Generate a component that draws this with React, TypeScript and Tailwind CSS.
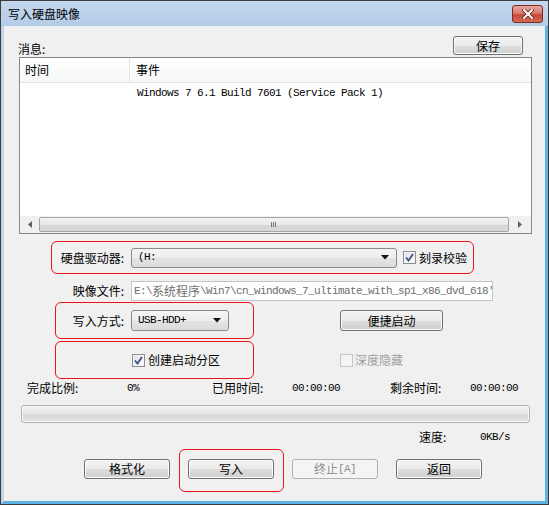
import clsx from 'clsx'
import type { ReactNode } from 'react'

const CJK = "font-['Noto_Sans_CJK_SC',sans-serif]"
const MONO = "font-['Liberation_Mono',monospace] text-[11px] tracking-[-0.6px]"

function Btn({
  children,
  className,
  disabled,
}: {
  children: ReactNode
  className?: string
  disabled?: boolean
}) {
  return (
    <div
      className={clsx(
        'flex items-center justify-center rounded-[3px] border text-[12px] leading-none',
        CJK,
        disabled
          ? 'border-[#adb2b5] bg-[#f4f4f4] text-[#8d8d8d]'
          : 'border-[#707070] bg-[linear-gradient(to_bottom,#f2f2f2_0%,#ebebeb_50%,#dddddd_51%,#cfcfcf_100%)] text-black shadow-[inset_0_0_0_1px_#fbfbfb]',
        className,
      )}
    >
      {children}
    </div>
  )
}

function Check({ checked, disabled }: { checked?: boolean; disabled?: boolean }) {
  return (
    <div
      className={clsx(
        'flex h-[13px] w-[13px] shrink-0 items-center justify-center border',
        disabled
          ? 'border-[#c6c6c6] bg-[#f4f4f4]'
          : 'border-[#8e8f8f] bg-[linear-gradient(135deg,#dcdcdc,#ffffff)] shadow-[inset_0_0_0_1px_#f4f4f4]',
      )}
    >
      {checked && (
        <svg width="9" height="9" viewBox="0 0 9 9">
          <path d="M1 4.5 L3.5 7.5 L8 1" fill="none" stroke="#3b4f8a" strokeWidth="1.8" />
        </svg>
      )}
    </div>
  )
}

function Combo({ children, className }: { children: ReactNode; className?: string }) {
  return (
    <div
      className={clsx(
        'flex items-center justify-between rounded-[3px] border border-[#8a8a8a] bg-[linear-gradient(to_bottom,#f5f5f5_0%,#ededed_50%,#e3e3e3_51%,#dcdcdc_100%)] pl-[6px] pr-[7px]',
        className,
      )}
    >
      <span className={clsx(MONO, 'text-black')}>{children}</span>
      <svg width="8" height="5" viewBox="0 0 8 5">
        <path d="M0 0 H8 L4 4.5 Z" fill="#111" />
      </svg>
    </div>
  )
}

function RedBox({ children, className }: { children: ReactNode; className?: string }) {
  return (
    <div className={clsx('flex items-center rounded-[6px] border border-[#e8151b]', className)}>
      {children}
    </div>
  )
}

export default function App() {
  return (
    <div className="flex h-[505px] w-[549px] flex-col border border-[#3c3c3c] bg-[#f0f0f0] text-[12px] text-black">
      {/* title bar */}
      <div className="flex h-[25px] shrink-0 items-center justify-between bg-[linear-gradient(to_bottom,#c4d8ee,#b3cce8)] pl-[7px] pr-[5px]">
        <span className={clsx(CJK, 'text-[12px] leading-none')}>写入硬盘映像</span>
        <div className="mt-[1px] flex h-[18px] w-[31px] items-center justify-center rounded-[3px] border border-[#7b2a22] bg-[linear-gradient(to_bottom,#e8a89c_0%,#d97c6c_45%,#c8473a_55%,#d46a58_100%)]">
          <svg width="12" height="10" viewBox="0 0 12 10">
            <path d="M2 1 L10 9 M10 1 L2 9" stroke="#5a1a14" strokeWidth="3.4" strokeLinecap="square" />
            <path d="M2 1 L10 9 M10 1 L2 9" stroke="#ffffff" strokeWidth="2" strokeLinecap="square" />
          </svg>
        </div>
      </div>

      {/* body */}
      <div className="flex flex-1 flex-col border-b-[3px] border-l-[3px] border-r-[3px] border-b-[#5db3e4] border-l-[#c0d5ec] border-r-[#5db3e4] bg-[#f0f0f0]">
        <div className="ml-[14px] mr-[22px] mt-[10px] flex items-end justify-between">
          <span className={clsx(CJK, 'leading-[12px]')}>消息:</span>
          <Btn className="h-[19px] w-[70px]">保存</Btn>
        </div>

        {/* list view */}
        <div className="ml-[15px] mt-[2px] flex h-[177px] w-[513px] flex-col border border-[#828790] bg-white">
          <div className="flex h-[25px] shrink-0 border-b border-[#e5e5e5] bg-[linear-gradient(to_bottom,#ffffff,#f6f7f8)]">
            <div className={clsx(CJK, 'flex w-[110px] items-center border-r border-[#e3e4e6] pl-[5px]')}>时间</div>
            <div className={clsx(CJK, 'flex items-center pl-[6px]')}>事件</div>
          </div>
          <div className="flex-1">
            <div className={clsx(MONO, 'ml-[117px] mt-[3px] leading-[14px]')}>
              Windows 7 6.1 Build 7601 (Service Pack 1)
            </div>
          </div>
          <div className="flex h-[17px] shrink-0 items-center bg-[#f0f0f0]">
            <div className="flex w-[19px] items-center justify-center">
              <svg width="4" height="7" viewBox="0 0 4 7">
                <path d="M4 0 V7 L0 3.5 Z" fill="#606060" />
              </svg>
            </div>
            <div className="flex h-[15px] flex-1 items-center justify-center rounded-[2px] border border-[#a5a5a5] bg-[linear-gradient(to_bottom,#f3f3f3_0%,#e8e8e8_50%,#d6d6d6_51%,#d9d9d9_100%)]">
              <svg width="6" height="5" viewBox="0 0 6 5">
                <path d="M0.5 0 V5 M2.5 0 V5 M4.5 0 V5" stroke="#777" strokeWidth="1" />
              </svg>
            </div>
            <div className="flex w-[22px] items-center justify-center">
              <svg width="4" height="7" viewBox="0 0 4 7">
                <path d="M0 0 V7 L4 3.5 Z" fill="#606060" />
              </svg>
            </div>
          </div>
        </div>

        {/* drive */}
        <RedBox className="ml-[47px] mt-[7px] h-[33px] w-[423px]">
          <span className={clsx(CJK, 'w-[72px] text-right')}>硬盘驱动器:</span>
          <Combo className="ml-[7px] h-[20px] w-[266px]">(H:</Combo>
          <div className="ml-[6px]">
            <Check checked />
          </div>
          <span className={clsx(CJK, 'ml-[3px]')}>刻录校验</span>
        </RedBox>

        {/* image file */}
        <div className="ml-[48px] mt-[7px] flex items-center">
          <span className={clsx(CJK, 'w-[72px] text-right')}>映像文件:</span>
          <div className="ml-[7px] flex h-[20px] w-[362px] items-center overflow-hidden whitespace-nowrap border border-[#c2c4ca] bg-white pl-[2px] text-[#6d6d6d]">
            <span className={MONO}>{'E:\\'}</span>
            <span className={clsx(CJK, 'text-[12px]')}>系统程序</span>
            <span className={MONO}>{'\\Win7\\cn_windows_7_ultimate_with_sp1_x86_dvd_618\''}</span>
          </div>
        </div>

        {/* write mode */}
        <div className="ml-[51px] mt-[1px] flex items-center">
          <RedBox className="h-[37px] w-[199px]">
            <span className={clsx(CJK, 'w-[68px] text-right')}>写入方式:</span>
            <Combo className="ml-[7px] h-[21px] w-[98px]">USB-HDD+</Combo>
          </RedBox>
          <Btn className="ml-[86px] h-[21px] w-[103px]">便捷启动</Btn>
        </div>

        {/* partition */}
        <div className="ml-[51px] mt-[2px] flex items-center">
          <RedBox className="h-[38px] w-[199px] pl-[76px]">
            <Check checked />
            <span className={clsx(CJK, 'ml-[3px]')}>创建启动分区</span>
          </RedBox>
          <div className="ml-[86px] flex items-center">
            <Check disabled />
            <span className={clsx(CJK, 'ml-[2px] text-[#a0a0a0]')}>深度隐藏</span>
          </div>
        </div>

        {/* stats */}
        <div className="ml-[23px] mt-[3px] flex h-[12px] items-center leading-[12px]">
          <span className={clsx(CJK, 'w-[100px]')}>完成比例:</span>
          <span className={clsx(MONO, 'w-[85px]')}>0%</span>
          <span className={clsx(CJK, 'w-[80px]')}>已用时间:</span>
          <span className={clsx(MONO, 'w-[98px]')}>00:00:00</span>
          <span className={clsx(CJK, 'w-[80px]')}>剩余时间:</span>
          <span className={MONO}>00:00:00</span>
        </div>

        {/* progress */}
        <div className="ml-[17px] mt-[11px] h-[18px] w-[509px] rounded-[3px] border border-[#b2b2b2] bg-[linear-gradient(to_bottom,#f3f3f3_0%,#e6e6e6_45%,#d9d9d9_55%,#e4e4e4_100%)] shadow-[inset_0_0_0_1px_#f6f6f6]" />

        {/* speed */}
        <div className="ml-[415px] mt-[8px] flex h-[12px] items-center leading-[12px]">
          <span className={clsx(CJK, 'w-[61px]')}>速度:</span>
          <span className={MONO}>0KB/s</span>
        </div>

        {/* buttons */}
        <div className="ml-[80px] mt-[6px] flex items-start">
          <Btn className="mt-[10px] h-[20px] w-[86px]">格式化</Btn>
          <div className="ml-[9px] h-[43px] w-[105px] rounded-[6px] border border-[#e8151b] pl-[8px] pt-[9px]">
            <Btn className="h-[20px] w-[86px]">写入</Btn>
          </div>
          <Btn disabled className="ml-[8px] mt-[10px] h-[20px] w-[86px]">
            <span>终止</span>
            <span className={MONO}>[A]</span>
          </Btn>
          <Btn className="ml-[18px] mt-[10px] h-[20px] w-[86px]">返回</Btn>
        </div>
      </div>
    </div>
  )
}
